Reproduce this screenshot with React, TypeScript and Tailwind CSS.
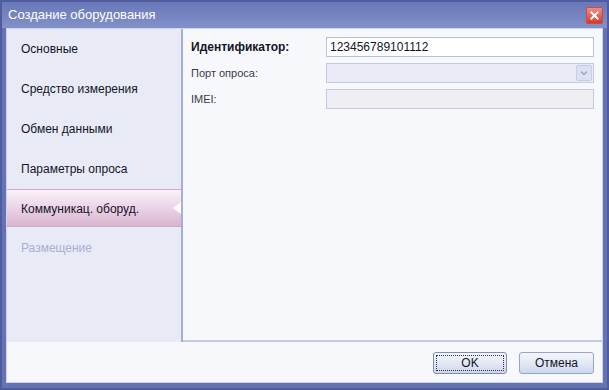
import { X } from "lucide-react";

const navItems = [
  { label: "Основные" },
  { label: "Средство измерения" },
  { label: "Обмен данными" },
  { label: "Параметры опроса" },
  { label: "Коммуникац. оборуд.", active: true },
  { label: "Размещение", disabled: true },
];

function NavItem({ label, active, disabled }: { label: string; active?: boolean; disabled?: boolean }) {
  if (active) {
    return (
      <div className="relative flex h-[38px] items-center border-y border-[#cfa9c8] bg-gradient-to-b from-[#fbf3f9] via-[#ead3e5] to-[#d8b5d0] pl-[14px] pt-[1px] text-[#141428]">
        {label}
        <div className="absolute right-0 top-1/2 h-0 w-0 -translate-y-1/2 border-y-[6px] border-r-[8px] border-y-transparent border-r-white" />
      </div>
    );
  }
  return (
    <div className={`flex h-[40px] items-center pl-[14px] ${disabled ? "pt-[2px] text-[#a8aed4]" : "text-[#141428]"}`}>
      {label}
    </div>
  );
}

export default function App() {
  return (
    <div
      className="flex h-[390px] w-[609px] flex-col border-2 border-[#4f5c9e] bg-[#6573b4] text-[12px]"
      style={{ fontFamily: '"Liberation Sans", Arial, sans-serif' }}
    >
      <div className="flex h-[26px] items-center justify-between bg-gradient-to-b from-[#6878b8] to-[#8391c9] pl-[6px] pr-[4px]">
        <span className="text-[13px] text-white">Создание оборудования</span>
        <div className="flex h-[17px] w-[17px] items-center justify-center rounded-[2px] border border-[#c0504a] bg-gradient-to-b from-[#f08a80] to-[#d8362c]">
          <X size={13} strokeWidth={3.5} className="text-white" />
        </div>
      </div>
      <div className="mx-[4px] mb-[5px] flex flex-1 flex-col border border-[#cdd3ec] bg-[#f7f8fc]">
        <div className="flex h-[313px]">
          <div className="flex w-[176px] flex-col border-r-2 border-[#a7afd8] bg-[#e8ebf5]">
            {navItems.map((item) => (
              <NavItem key={item.label} {...item} />
            ))}
          </div>
          <div className="flex flex-1 flex-col gap-[6px] border-b-2 border-[#c4cae6] bg-[#f7f8fc] pl-[8px] pr-[8px] pt-[8px]">
            <div className="flex h-[20px] items-center">
              <span className="w-[135px] font-bold text-[#141428]">Идентификатор:</span>
              <div className="flex h-[20px] flex-1 items-center border border-[#b7bfe0] bg-white pl-[3px] text-[#141428]">
                123456789101112
              </div>
            </div>
            <div className="flex h-[20px] items-center">
              <span className="w-[135px] text-[11px] text-[#3a3a4a]">Порт опроса:</span>
              <div className="flex h-[20px] flex-1 items-center justify-end border border-[#c4cae6] bg-[#e8ebf5] pr-[1px]">
                <div className="flex h-[16px] w-[16px] items-center justify-center rounded-[2px] border border-[#c7cde8] bg-[#dde1f1]">
                  <svg width="8" height="6" viewBox="0 0 8 6">
                    <path d="M1 1.5 L4 4.5 L7 1.5" fill="none" stroke="#9aa2c8" strokeWidth="1.4" />
                  </svg>
                </div>
              </div>
            </div>
            <div className="flex h-[20px] items-center">
              <span className="w-[135px] text-[11px] text-[#3a3a4a]">IMEI:</span>
              <div className="h-[20px] flex-1 border border-[#c4cae6] bg-[#efeff3]" />
            </div>
          </div>
        </div>
        <div className="flex flex-1 items-center justify-end gap-[12px] pr-[8px] pt-[2px]">
          <button className="flex h-[22px] w-[74px] items-center justify-center rounded-[3px] border border-[#7f8bb8] bg-gradient-to-b from-[#f4f6fb] via-[#e3e8f4] to-[#cdd6ec] text-[#141428] outline-1 outline-dotted -outline-offset-4 outline-[#333]">
            OK
          </button>
          <button className="flex h-[22px] w-[75px] items-center justify-center rounded-[3px] border border-[#98a3cc] bg-gradient-to-b from-[#f4f6fb] via-[#e3e8f4] to-[#cdd6ec] text-[#141428]">
            Отмена
          </button>
        </div>
      </div>
    </div>
  );
}
